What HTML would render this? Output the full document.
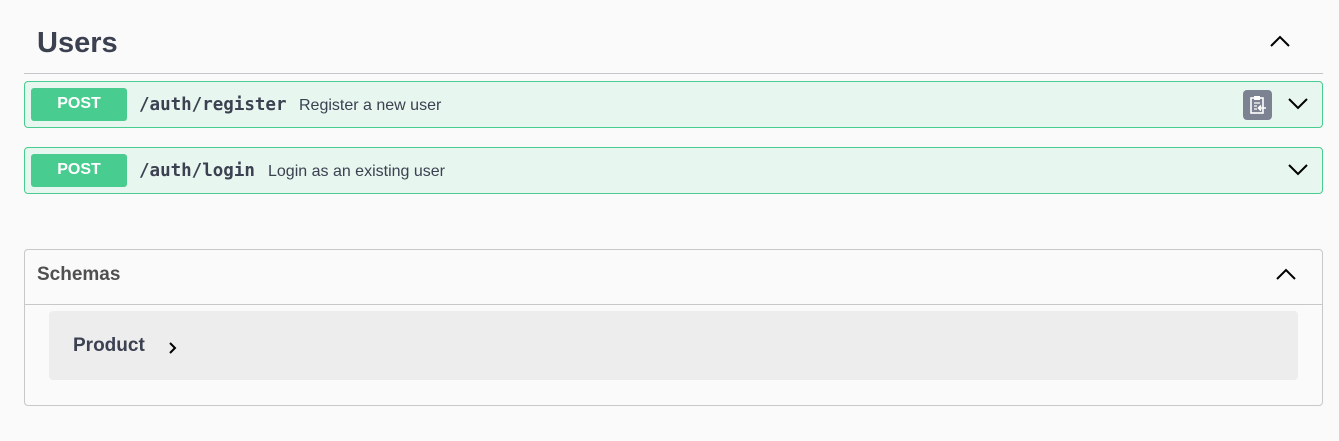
<!DOCTYPE html>
<html><head><style>
body{margin:0;width:1339px;height:441px;background:#fafafa;font-family:"Liberation Sans",sans-serif;position:relative;overflow:hidden;color:#3b4151}
.a{position:absolute}
.op{position:absolute;left:24px;width:1297px;height:45px;border:1px solid #49cc90;border-radius:4px;background:#e7f6ee}
.post{position:absolute;left:6px;top:6px;width:96px;height:33px;background:#49cc90;border-radius:3px;color:#fff;font-weight:bold;font-size:16px;text-align:center;line-height:32px}
.path{position:absolute;left:114px;top:1px;line-height:45px;font-family:"DejaVu Sans Mono","Liberation Mono",monospace;font-weight:bold;font-size:17.5px;color:#3b4151}
.desc{position:absolute;top:1px;line-height:45px;font-size:16px;color:#3b4151}
</style></head><body>
<div class="a" style="left:37px;top:27px;font-size:29px;font-weight:bold;">Users</div>
<svg class="a" style="left:1269px;top:34px" width="22" height="14" viewBox="0 0 22 14"><path d="M2 12 L11 3 L20 12" fill="none" stroke="#000" stroke-width="2"/></svg>
<div class="a" style="left:24px;top:73px;width:1299px;height:1px;background:#c4c6ca"></div>

<div class="op" style="top:81px">
<div class="post">POST</div>
<div class="path">/auth/register</div>
<div class="desc" style="left:274px">Register a new user</div>
<div class="a" style="left:1218px;top:8px;width:29px;height:30px;background:#7d8293;border-radius:4px">
<svg width="29" height="30" viewBox="0 0 29 30"><rect x="8" y="8" width="12" height="15" fill="none" stroke="#fff" stroke-width="1.6"/><rect x="11" y="6" width="6" height="4" fill="#fff"/><path d="M11 13h6M11 16h3M11 19h3" stroke="#fff" stroke-width="1.2"/><path d="M23 18h-7M18 15.5l-2.5 2.5 2.5 2.5" fill="none" stroke="#fff" stroke-width="1.6"/></svg></div>
<svg class="a" style="left:1262px;top:15px" width="22" height="14" viewBox="0 0 22 14"><path d="M2 2 L11 11 L20 2" fill="none" stroke="#000" stroke-width="2"/></svg>
</div>

<div class="op" style="top:147px">
<div class="post">POST</div>
<div class="path">/auth/login</div>
<div class="desc" style="left:243px">Login as an existing user</div>
<svg class="a" style="left:1262px;top:15px" width="22" height="14" viewBox="0 0 22 14"><path d="M2 2 L11 11 L20 2" fill="none" stroke="#000" stroke-width="2"/></svg>
</div>

<div class="a" style="left:24px;top:249px;width:1297px;height:155px;border:1px solid #c8c8c8;border-radius:4px">
<div class="a" style="left:12px;top:14px;font-size:19px;font-weight:bold;color:#505050">Schemas</div>
<svg class="a" style="left:1250px;top:17px" width="22" height="14" viewBox="0 0 22 14"><path d="M2 12 L11 3 L20 12" fill="none" stroke="#000" stroke-width="2"/></svg>
<div class="a" style="left:0;top:54px;width:1297px;height:1px;background:#c8c8c8"></div>
<div class="a" style="left:24px;top:61px;width:1249px;height:69px;background:#ededed;border-radius:4px">
<div class="a" style="left:24px;top:24px;font-size:19px;font-weight:bold;color:#3b4151">Product</div>
<svg class="a" style="left:119px;top:30px" width="10" height="14" viewBox="0 0 10 14"><path d="M2 2 L7 7 L2 12" fill="none" stroke="#000" stroke-width="2"/></svg>
</div>
</div>
</body></html>
